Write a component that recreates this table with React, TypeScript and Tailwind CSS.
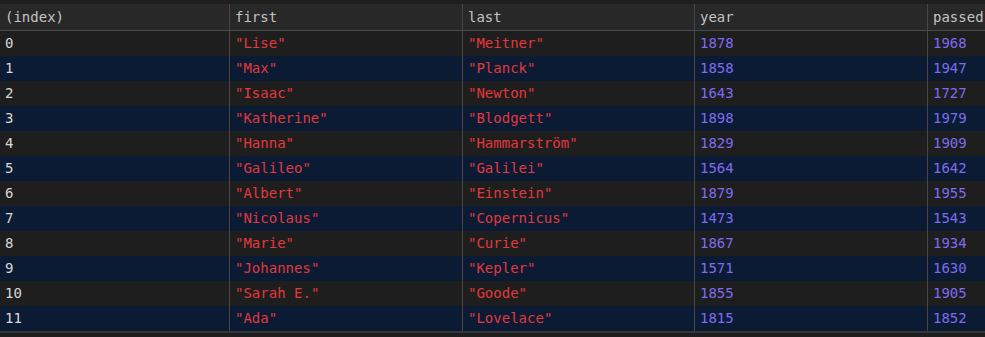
import React from 'react';

type Person = { first: string; last: string; year: number; passed: number };

const people: Person[] = [
  { first: 'Lise', last: 'Meitner', year: 1878, passed: 1968 },
  { first: 'Max', last: 'Planck', year: 1858, passed: 1947 },
  { first: 'Isaac', last: 'Newton', year: 1643, passed: 1727 },
  { first: 'Katherine', last: 'Blodgett', year: 1898, passed: 1979 },
  { first: 'Hanna', last: 'Hammarström', year: 1829, passed: 1909 },
  { first: 'Galileo', last: 'Galilei', year: 1564, passed: 1642 },
  { first: 'Albert', last: 'Einstein', year: 1879, passed: 1955 },
  { first: 'Nicolaus', last: 'Copernicus', year: 1473, passed: 1543 },
  { first: 'Marie', last: 'Curie', year: 1867, passed: 1934 },
  { first: 'Johannes', last: 'Kepler', year: 1571, passed: 1630 },
  { first: 'Sarah E.', last: 'Goode', year: 1855, passed: 1905 },
  { first: 'Ada', last: 'Lovelace', year: 1815, passed: 1852 },
];

const cols = 'grid grid-cols-[229px_233px_232px_233px_240px]';
const cell = 'h-[25px] flex items-center pl-[5px] whitespace-nowrap border-l border-[#464646] first:border-l-0';

const App: React.FC = () => {
  return (
    <div className="w-[985px] h-[337px] overflow-hidden bg-[#1e1e1e] pt-[4px] font-['DejaVu_Sans_Mono',monospace] text-[14px]">
      {/* header */}
      <div className={`${cols} bg-[#282828] border-b border-[#4a4a4a] text-[#c4c4c4]`}>
        {['(index)', 'first', 'last', 'year', 'passed'].map((h) => (
          <div key={h} className={`${cell} h-[26px]`}>{h}</div>
        ))}
      </div>

      {/* rows */}
      <div className="border-b-2 border-[#353535]">
        {people.map((p, i) => (
          <div key={i} className={`${cols} ${i % 2 ? 'bg-[#0b1b33]' : 'bg-[#1e1e1e]'}`}>
            <div className={`${cell} text-[#d8d8d8]`}>{i}</div>
            <div className={`${cell} text-[#e3383c]`}>"{p.first}"</div>
            <div className={`${cell} text-[#e3383c]`}>"{p.last}"</div>
            <div className={`${cell} text-[#7d6cf2]`}>{p.year}</div>
            <div className={`${cell} text-[#7d6cf2]`}>{p.passed}</div>
          </div>
        ))}
      </div>
    </div>
  );
};

export default App;
